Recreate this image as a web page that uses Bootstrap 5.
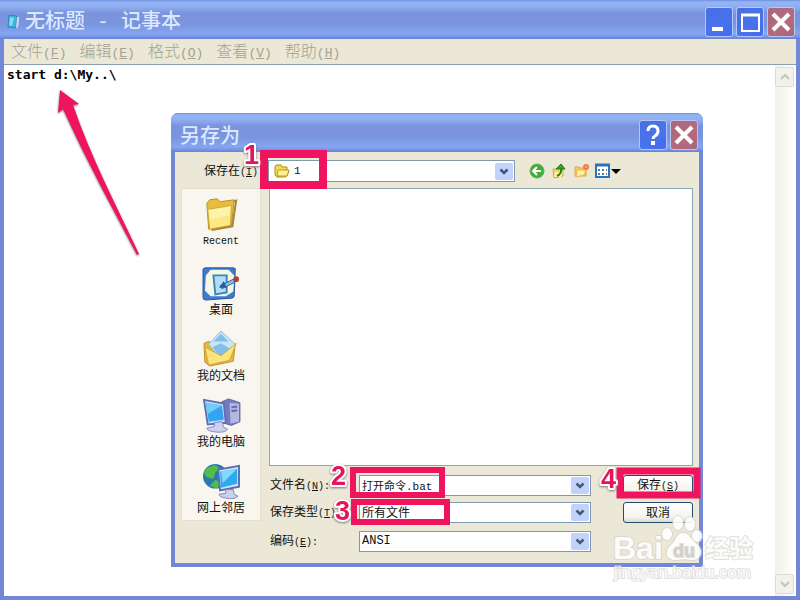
<!DOCTYPE html>
<html lang="zh-CN">
<head>
<meta charset="utf-8">
<meta name="viewport" content="width=device-width, initial-scale=1">
<title>无标题 - 记事本</title>
<link href="https://cdn.jsdelivr.net/npm/bootstrap@5.3.0/dist/css/bootstrap.min.css" rel="stylesheet">
<style>
  html, body { height: 100%; }
  body { font-family: "Noto Sans CJK SC", sans-serif; font-size: 12px; line-height: 16px; color: #111; background: #7688d6; overflow: hidden; }
  .win { background: #7387d8; padding: 0 4px 4px; }
  .titlebar { height: 39px; margin: 0 -4px; padding: 4px 5px 0; color: #dce8ff;
    background: linear-gradient(#6f8fe0 0, #94b4f4 2px, #8eaef0 7px, #7993dd 13px, #7a94de 24px, #84a6f2 34px, #7590e2 37px, #6c80cf 39px); }
  .lat { font-family: "Liberation Mono", monospace; font-size: 10px; }
  .titlebar h1, .titlebar h2 { font-size: 20px; line-height: 24px; font-weight: 500; }
  .titlebar h2 { padding-left: 4px; }
  .caps { display: flex; gap: 3px; }
  .cap { width: 28px; height: 30px; padding: 0; border: 1px solid #b3c8f6; border-radius: 3px; background: linear-gradient(135deg, #4a6fe0, #4872ee 60%, #416af0); }
  .cap-x { background: linear-gradient(135deg, #a8687f, #b56a7d 60%, #a9647e); }
  .cap svg, .tool svg, .place svg { display: block; margin: auto; }
  .menubar { height: 26px; background: #ebe8d7; border-bottom: 1px solid #8c9fb0; padding-left: 7px; gap: 13px; }
  .menubar a { color: #a5a28f; font-size: 16px; line-height: 24px; font-weight: 300; text-decoration: none; white-space: nowrap; }
  .menubar .lat { font-size: 13px; }
  .sheet { padding-right: 2px; }
  .editor { resize: none; outline: 0; padding: 1px 3px; font: bold 13px/18px "DejaVu Sans Mono", monospace; color: #000; }
  .vbar { width: 19px; padding: 2px 0; background: linear-gradient(90deg, #f1f0e9, #fefefb); }
  .vbar button { height: 20px; padding: 0; border: 1px solid #dedccf; border-radius: 2px; background: #f2f1ea; }
  .vbar svg { display: block; margin: auto; }
  .dialog { position: absolute; left: 171px; right: 97px; top: 113px; bottom: 33px; border-radius: 7px 7px 0 0; }
  .dialog .titlebar { border-radius: 7px 7px 0 0; }
  .dialog-body { background: #ebe8d7; padding: 8px 6px 11px; gap: 6px; }
  .lookup { height: 22px; }
  .lookup label { width: 87px; padding-left: 23px; white-space: nowrap; }
  .spot { width: 247px; }
  .spot svg { position: absolute; left: 6px; top: 4px; }
  .combo { height: 21px; min-width: 0; border: 1px solid #8199ad; background-color: #fff; font-size: 12px; line-height: 16px; color: #111; border-radius: 0; appearance: none; padding: 0 20px 1px 2px; }
  select.combo, .drop { background: #fff url("data:image/svg+xml,%3Csvg xmlns='http://www.w3.org/2000/svg' width='18' height='17'%3E%3Crect width='18' height='17' rx='2' fill='%23c2d2fa'/%3E%3Cpath d='M5.500 6.500L9 10l3.500-3.500' fill='none' stroke='%23465878' stroke-width='2.500'/%3E%3C/svg%3E") no-repeat right 1px center; }
  .spot .combo { height: 22px; padding-left: 25px; }
  .spot .combo, .namebox { font-family: "Liberation Mono", "Noto Sans CJK SC", monospace; font-size: 11px; }
  .drop { width: 20px; height: 21px; border: 1px solid #8199ad; border-left: 0; padding: 0; }
  .namebox { border-right: 0; padding-right: 0; }
  .tools { display: flex; gap: 6px; margin-left: 14px; }
  .tool { width: 16px; height: 16px; border: 0; padding: 0; background: none; }
  .tool-wide { width: 27px; }
  .places { width: 80px; background: #f8f6ee; border: 1px solid #e3e0d0; padding: 7px 0 5px; gap: 14px; }
  .place { border: 0; padding: 0; background: none; color: #111; line-height: 16px; }
  .place svg { width: 40px; height: 36px; }
  .place:first-child { line-height: 14px; padding-bottom: 2px; }
  .listing { border: 1px solid #8ea5b3; background: #fff; margin-bottom: 9px; }
  .field { margin-bottom: 6px; }
  .field label { width: 90px; padding-left: 1px; white-space: nowrap; }
  .act { width: 70px; height: 21px; margin-left: 32px; padding: 0 0 2px; border: 1px solid #234b73; border-radius: 3px; background: linear-gradient(#fff, #f4f3ed 75%, #dcd9cc); color: #111; }
  .notes { position: absolute; inset: 0; width: 100%; height: 100%; pointer-events: none; }
  .digit { font: bold 27px "Liberation Sans", sans-serif; fill: #e5155c; stroke: #fff; stroke-width: 4px; stroke-linejoin: round; paint-order: stroke; filter: drop-shadow(0 1px 1px #777); }
  .wm { fill: #fff; fill-opacity: .9; stroke: #cfcdc8; stroke-width: 2px; stroke-opacity: .6; paint-order: stroke; font-family: "Liberation Sans", "Noto Sans CJK SC", sans-serif; }
</style>
<script src="https://cdn.jsdelivr.net/npm/bootstrap@5.3.0/dist/js/bootstrap.bundle.min.js"></script>
</head>
<body>
<main class="win vh-100 d-flex flex-column">
  <header class="titlebar d-flex align-items-center flex-shrink-0">
    <svg width="16" height="18" viewBox="0 0 16 18" aria-hidden="true"><path d="M5 3l9 1-1 10-2 1z" fill="#dceefa"/><path d="M4 2l8 1-1 12-8-1z" fill="#39b5d8" stroke="#3680bb"/><path d="M5 4l4 1-2 8-3-1z" fill="#7be1f1"/><path d="M12 4l2 1-1 9-2 1z" fill="#c6ddf4"/></svg>
    <h1 class="mb-0 ms-1 flex-fill">无标题<span class="lat fs-5"> - </span>记事本</h1>
    <div class="caps">
      <button class="cap" aria-label="最小化"><svg width="24" height="24"><path d="M5 19h11" stroke="#fff" stroke-width="4"/></svg></button>
      <button class="cap" aria-label="最大化"><svg width="24" height="24"><path d="M4 5h17v16H4z" fill="none" stroke="#fff" stroke-width="2"/><path d="M3 5h19" stroke="#fff" stroke-width="3"/></svg></button>
      <button class="cap cap-x" aria-label="关闭"><svg width="24" height="24"><path d="M4 4l16 16M20 4L4 20" stroke="#fff" stroke-width="4"/></svg></button>
    </div>
  </header>
  <nav class="menubar d-flex align-items-center flex-shrink-0">
    <a href="#">文件<span class="lat">(<u>F</u>)</span></a>
    <a href="#">编辑<span class="lat">(<u>E</u>)</span></a>
    <a href="#">格式<span class="lat">(<u>O</u>)</span></a>
    <a href="#">查看<span class="lat">(<u>V</u>)</span></a>
    <a href="#">帮助<span class="lat">(<u>H</u>)</span></a>
  </nav>
  <div class="sheet d-flex flex-fill bg-white">
    <textarea class="editor flex-fill border-0" aria-label="文本" spellcheck="false">start d:\My..\</textarea>
    <div class="vbar d-flex flex-column justify-content-between">
      <button aria-label="向上滚动"><svg width="12" height="10"><path d="M2 7l4-4 4 4" fill="none" stroke="#c6c3b8" stroke-width="2"/></svg></button>
      <button aria-label="向下滚动"><svg width="12" height="10"><path d="M2 3l4 4 4-4" fill="none" stroke="#c6c3b8" stroke-width="2"/></svg></button>
    </div>
  </div>
</main>

<section class="dialog win d-flex flex-column" role="dialog" aria-labelledby="dlg">
  <header class="titlebar d-flex align-items-center flex-shrink-0">
    <h2 id="dlg" class="mb-0 flex-fill">另存为</h2>
    <div class="caps">
      <button class="cap" aria-label="帮助"><svg width="24" height="24"><path d="M7 8q0-5 5-5t5 5q0 3-3 5-2 1-2 3" fill="none" stroke="#fff" stroke-width="3"/><path d="M10 18h4v4h-4z" fill="#fff"/></svg></button>
      <button class="cap cap-x" aria-label="关闭"><svg width="24" height="24"><path d="M4 4l16 16M20 4L4 20" stroke="#fff" stroke-width="4"/></svg></button>
    </div>
  </header>
  <div class="dialog-body flex-fill d-flex flex-column">
    <div class="lookup d-flex align-items-center">
      <label for="where">保存在<span class="lat">(<u>I</u>):</span></label>
      <div class="spot position-relative">
        <select id="where" class="combo w-100 d-block"><option>1</option></select>
        <svg width="16" height="14" aria-hidden="true"><path d="M1 3l1-2h5l1 2h5v3l2 1-2 5-2 1H3l-2-2z" fill="#f3d851" stroke="#a98d20"/><path d="M4 6h11l-2 6H3z" fill="#fff08f" stroke="#b99b2b"/></svg>
      </div>
      <div class="tools">
        <button class="tool" aria-label="后退"><svg width="16" height="16"><circle cx="8" cy="8" r="7" fill="#3fae36" stroke="#6aab58"/><path d="M12 8H5M8 4L4 8l4 4" fill="none" stroke="#fff" stroke-width="2"/></svg></button>
        <button class="tool" aria-label="向上一级"><svg width="16" height="16"><path d="M2 6h4l1-2h5v9l-9 2z" fill="#f4d75c" stroke="#d3a93c"/><path d="M4 9h8l-2 5H3z" fill="#fff2a0"/><path d="M6 13q5-2 4-8" fill="none" stroke="#237d25" stroke-width="2"/><path d="M5 6l5-5 4 5z" fill="#36a52f" stroke="#237d25"/></svg></button>
        <button class="tool" aria-label="新建文件夹"><svg width="16" height="16"><path d="M2 4h4l1 1h6v8H2z" fill="#f3cf62" stroke="#dda74c"/><path d="M4 7h9l-2 5-8 2z" fill="#fff0a5" stroke="#e5b750"/><circle cx="13" cy="4" r="2" fill="#fbb27c" stroke="#f37c42" stroke-width="2"/></svg></button>
        <button class="tool tool-wide" aria-label="查看菜单"><svg width="27" height="16"><path d="M1 2h13v12H1z" fill="#fff" stroke="#2b74bc" stroke-width="2"/><path d="M0 2h15" stroke="#2b74bc" stroke-width="3"/><path d="M3 7h9M3 11h9" stroke="#5375a7" stroke-width="2" stroke-dasharray="2 2"/><path d="M16 6h10l-5 5z"/></svg></button>
      </div>
    </div>
    <div class="d-flex flex-fill">
      <nav class="places d-flex flex-column align-self-start flex-shrink-0 me-1" aria-label="位置">
        <button class="place"><svg viewBox="0 0 40 38"><path d="M5 8l3-4 8-1 3 3 15-2-3 27-24 4z" fill="#e8bd3e" stroke="#b88d29"/><path d="M6 14l25-4-1 21-22 4z" fill="#fce984" stroke="#cfa537"/><path d="M7 15l23-4-1 9-21 5z" fill="#fdf2ab"/><path d="M34 6l2-1-4 27-22 4" fill="none" stroke="#a78235" stroke-width="2"/></svg><span class="lat">Recent</span></button>
        <button class="place"><svg viewBox="0 0 40 38"><path d="M1 5q0-2 3-2h29q3 0 2 3l-1 26q0 3-3 3L4 37q-3 0-3-3z" fill="#3e7dcd" stroke="#22509f"/><path d="M9 5h19l6 6-1 17-8 5H9l-6-6 1-16z" fill="#f3f7e4"/><path d="M12 11h14v18l-12 2z" fill="#b3dcf8" stroke="#3e83bd" stroke-width="2"/><path d="M19 22l14-7 2 3-14 7z" fill="#89bce3" stroke="#315f95"/><path d="M18 24l5-7 3 7z" fill="#245c9e"/><circle cx="36" cy="15" r="3" fill="#b43d33"/></svg>桌面</button>
        <button class="place"><svg viewBox="0 0 40 38"><path d="M2 13l5-2 5 2 23 1-2 18-25 5-5-4z" fill="#e9b936" stroke="#be912b"/><path d="M20 0l15 14-15 17L7 14z" fill="#c9e6fb" stroke="#8bbbe1"/><path d="M20 3l8 8H12zM11 17l9-4 10 6-11 10z" fill="#83bdea"/><path d="M3 17l17 9 16-13-7 18-22 5z" fill="#fbe47d" stroke="#d1a539"/></svg>我的文档</button>
        <button class="place"><svg viewBox="0 0 40 38"><path d="M21 5l7-3 12 4v20l-9 4-10-3z" fill="#7779bc" stroke="#62659f"/><path d="M29 6l10 1v19l-9 2z" fill="#b5b7e2"/><path d="M31 11l6-1M31 15l6-1" stroke="#626aae" stroke-width="2"/><path d="M2 3l21 4 2 20-19 2z" fill="#d2dcf6" stroke="#5c70b8" stroke-width="2"/><path d="M4 6l17 3 2 15-16 2z" fill="#31a6ee"/><path d="M4 6l17 3-15 9z" fill="#70cdf9"/><path d="M13 27l8-1 2 6 4 2q-3 4-12 3-10-1-10-4l8-2z" fill="#cbd0ed" stroke="#8088c3"/></svg>我的电脑</button>
        <button class="place"><svg viewBox="0 0 40 38"><circle cx="14" cy="14" r="13" fill="#2979b7"/><path d="M5 5l9-3 5 4-5 4-2 7-7-2-3-4zM14 18l6 2-4 7-8-3z" fill="#53bd45"/><path d="M17 7l22-4v22l-20 4z" fill="#d1e2fa" stroke="#566ab1" stroke-width="2"/><path d="M19 9l18-3v16l-17 4z" fill="#2baaf0"/><path d="M20 9l17-3-15 15z" fill="#82d9fa"/><path d="M25 28h8l1 5 4 2q-4 4-13 2-7-1-7-4l7-1z" fill="#cbd0ed" stroke="#7d84bd"/></svg>网上邻居</button>
      </nav>
      <div class="d-flex flex-column flex-fill ps-1">
        <div class="listing flex-fill" role="listbox" aria-label="文件"></div>
        <div class="field d-flex align-items-center">
          <label for="fname">文件名<span class="lat">(<u>N</u>):</span></label>
          <input id="fname" class="combo namebox flex-fill" value="打开命令.bat"><button class="drop" aria-label="最近的文件名"></button>
          <button class="act">保存<span class="lat">(<u>S</u>)</span></button>
        </div>
        <div class="field d-flex align-items-center mb-2">
          <label for="ftype">保存类型<span class="lat">(<u>T</u>)</span></label>
          <select id="ftype" class="combo flex-fill"><option>所有文件</option></select>
          <button class="act">取消</button>
        </div>
        <div class="field d-flex align-items-center mb-0">
          <label for="enc">编码<span class="lat">(<u>E</u>):</span></label>
          <select id="enc" class="combo lat flex-fill"><option>ANSI</option></select>
          <span class="act invisible"></span>
        </div>
      </div>
    </div>
  </div>
</section>

<svg class="notes" viewBox="0 0 800 600">
  <g class="wm">
    <text x="613" y="559" font-size="32" font-weight="bold">Bai</text>
    <ellipse cx="667" cy="534" rx="5" ry="6"/><ellipse cx="678" cy="523" rx="5" ry="7"/><ellipse cx="690" cy="524" rx="5" ry="7"/><ellipse cx="697" cy="536" rx="5" ry="6"/>
    <path d="M683 533c7 0 8 7 14 11 8 8 3 17-6 16-5-1-9-1-14 0-10 1-14-8-6-15 5-4 5-12 12-12z"/>
    <text x="673" y="557" font-size="18" font-weight="bold" fill="#d0cdc5">du</text>
    <text x="705" y="557" font-size="24" font-weight="bold">经验</text>
    <text x="614" y="578" font-size="17">jingyan.baidu.com</text>
  </g>
  <path d="M60 90l19 14-6 1c17 50 43 100 66 149l-2 1C112 207 85 158 63 109l-5 4z" fill="#f0145f" filter="drop-shadow(0 1px 1px #777)"/>
  <g fill="none" stroke="#f0145f" stroke-width="7">
    <path d="M264 154h59v31h-59z" stroke-width="8"/>
    <path d="M353 470h89v25h-89z" stroke-width="6"/>
    <path d="M354 502h93v20h-93z" stroke-width="6"/>
    <path d="M620 471h77v24h-77z"/>
  </g>
  <text class="digit" x="244" y="164">1</text>
  <text class="digit" x="331" y="485">2</text>
  <text class="digit" x="335" y="520">3</text>
  <text class="digit" x="601" y="488">4</text>
</svg>
</body>
</html>
